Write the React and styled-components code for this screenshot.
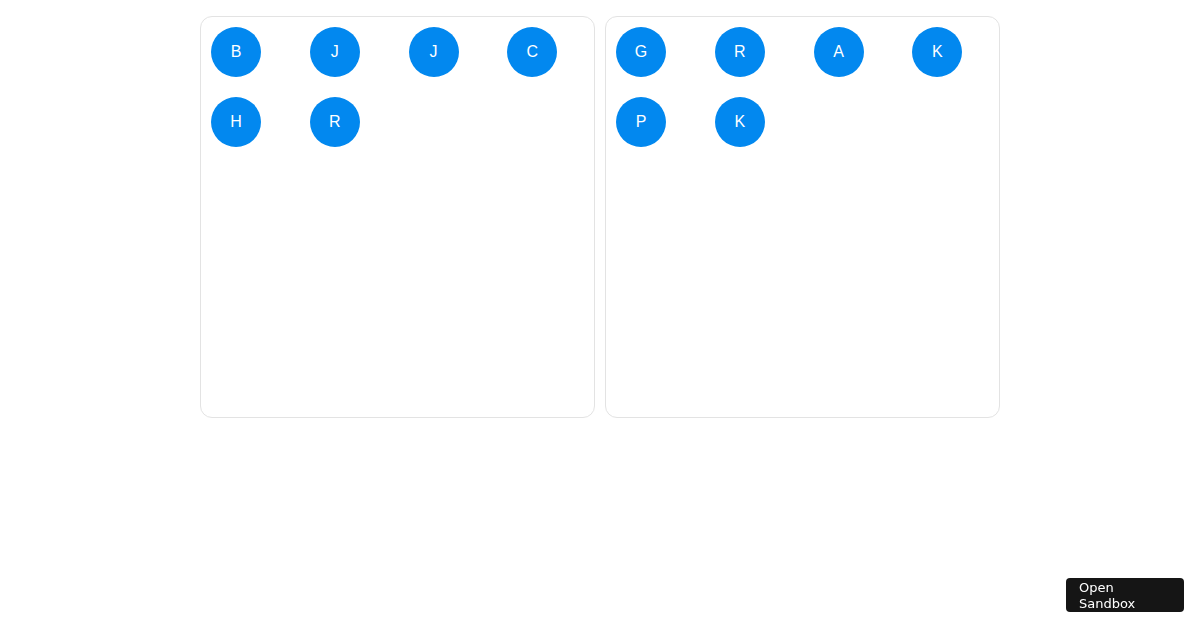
import styled, { createGlobalStyle } from "styled-components";

const GlobalStyle = createGlobalStyle`
  html, body {
    margin: 0;
    padding: 0;
    background: #ffffff;
  }
  body {
    font-family: "Liberation Sans", Arial, sans-serif;
  }
`;

const lists = [
  ["B", "J", "J", "C", "H", "R"],
  ["G", "R", "A", "K", "P", "K"],
];

export default function App() {
  return (
    <>
      <GlobalStyle />
      <Page>
        <Board>
          {lists.map((list, i) => (
            <Panel key={i}>
              {list.map((letter, j) => (
                <Avatar key={j}>{letter}</Avatar>
              ))}
            </Panel>
          ))}
        </Board>
      </Page>
      <SandboxButton>Open Sandbox</SandboxButton>
    </>
  );
}

const Page = styled.div`
  display: flex;
  justify-content: center;
  padding-top: 16px;
  width: 1200px;
  height: 630px;
  box-sizing: border-box;
`;

const Board = styled.div`
  display: flex;
  gap: 10px;
  width: 800px;
`;

const Panel = styled.div`
  flex: 1;
  height: 402px;
  box-sizing: border-box;
  border: 1px solid #e3e3e3;
  border-radius: 12px;
  padding: 10px;
  display: grid;
  grid-template-columns: repeat(4, 1fr);
  grid-auto-rows: 50px;
  column-gap: 22px;
  row-gap: 20px;
  align-content: start;
`;

const Avatar = styled.div`
  width: 50px;
  height: 50px;
  border-radius: 50%;
  background: #0288ef;
  color: #ffffff;
  display: flex;
  align-items: center;
  justify-content: center;
  font-size: 16px;
`;

const SandboxButton = styled.button`
  position: fixed;
  right: 16px;
  bottom: 18px;
  width: 118px;
  height: 34px;
  padding: 1px 13px 0;
  box-sizing: border-box;
  background: #151515;
  color: #ffffff;
  border: none;
  border-radius: 4px;
  font-family: "DejaVu Sans", sans-serif;
  font-size: 13px;
  line-height: 16px;
  text-align: left;
  word-spacing: 100px;
  cursor: pointer;
`;
